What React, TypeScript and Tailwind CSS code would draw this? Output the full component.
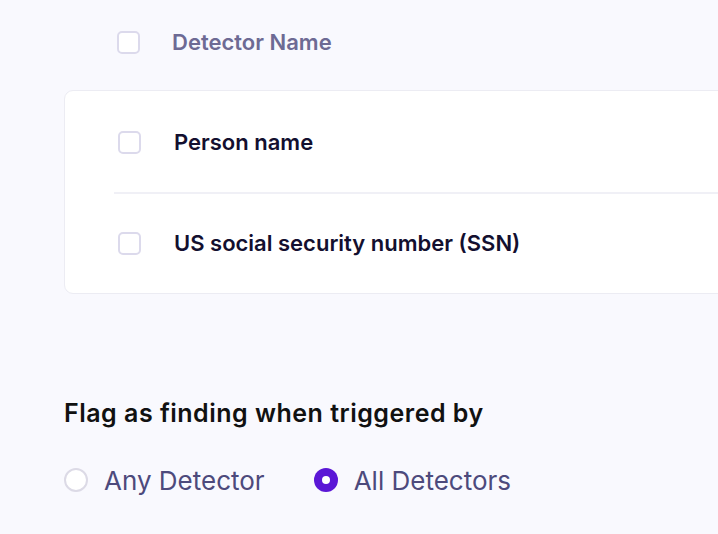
import { FC } from 'react';

const Checkbox: FC = () => (
  <span className="block h-[23px] w-[23px] shrink-0 rounded-[5px] border-2 border-[#dcdaec] bg-white" />
);

const Radio: FC<{ checked?: boolean }> = ({ checked }) =>
  checked ? (
    <span className="flex h-[24px] w-[24px] shrink-0 items-center justify-center rounded-full bg-[#5b17d6]">
      <span className="h-[8px] w-[8px] rounded-full bg-white" />
    </span>
  ) : (
    <span className="block h-[24px] w-[24px] shrink-0 rounded-full border-2 border-[#dcdae6] bg-white" />
  );

const detectors = ['Person name', 'US social security number (SSN)'];

export default function App() {
  return (
    <div
      className="h-[534px] w-[718px] overflow-hidden bg-[#f9f9fe] pl-[64px]"
      style={{ fontFamily: 'Inter, "Open Sans", sans-serif' }}
    >
      {/* table header */}
      <div className="flex h-[90px] items-center gap-[32px] pb-[6px] pl-[53px]">
        <Checkbox />
        <span className="text-[22px] font-semibold text-[#6d6a94]">Detector Name</span>
      </div>

      {/* detector list */}
      <div className="w-[720px] rounded-[9px] border border-[#ececf3] bg-white py-[1px]">
        <div className="ml-[49px]">
          {detectors.map((name, i) => (
            <div
              key={name}
              className={`flex h-[100px] items-center gap-[33px] pl-[4px] ${
                i > 0 ? 'border-t-2 border-[#f0f0f6]' : ''
              }`}
            >
              <Checkbox />
              <span className="text-[22px] font-semibold text-[#130f2f]">{name}</span>
            </div>
          ))}
        </div>
      </div>

      {/* trigger mode */}
      <div className="pt-[101px]">
        <h2 className="text-[25px] font-semibold tracking-[0.5px] text-[#111111]">
          Flag as finding when triggered by
        </h2>
        <div className="mt-[28px] flex items-center">
          <label className="flex items-center gap-[16px]">
            <Radio />
            <span className="text-[26px] text-[#4d4a7c]">Any Detector</span>
          </label>
          <label className="ml-[49px] flex items-center gap-[16px]">
            <Radio checked />
            <span className="text-[26px] text-[#4d4a7c]">All Detectors</span>
          </label>
        </div>
      </div>
    </div>
  );
}
